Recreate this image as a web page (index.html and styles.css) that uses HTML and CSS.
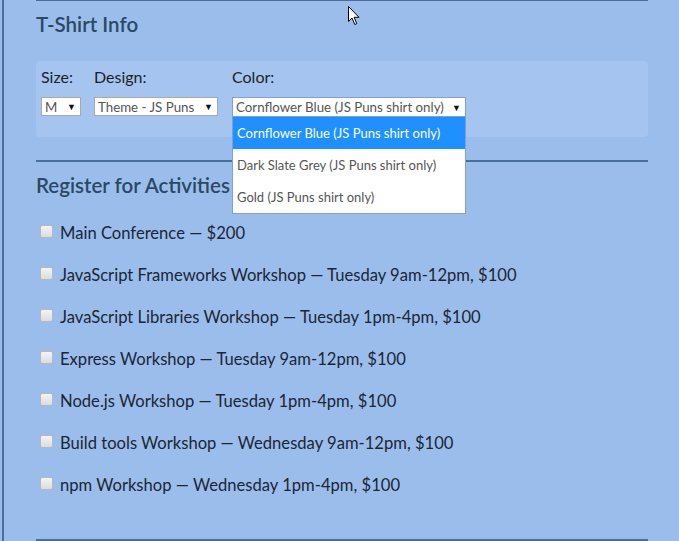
FILE: index.html
```html
<!DOCTYPE html>
<html lang="en">
<head>
<meta charset="utf-8">
<title>T-Shirt Info</title>
<link rel="stylesheet" href="styles.css">
</head>
<body>
<div class="page">
  <section class="block tshirt">
    <h2 class="legend">T-Shirt Info</h2>
    <div class="shirt-box">
      <div class="field">
        <span class="label">Size:</span>
        <div class="select select-size"><span class="value">M</span><span class="arrow">▼</span></div>
      </div>
      <div class="field">
        <span class="label">Design:</span>
        <div class="select select-design"><span class="value">Theme - JS Puns</span><span class="arrow">▼</span></div>
      </div>
      <div class="field field-color">
        <span class="label">Color:</span>
        <div class="select select-color"><span class="value">Cornflower Blue (JS Puns shirt only)</span><span class="arrow">▼</span></div>
        <ul class="dropdown">
          <li class="option active">Cornflower Blue (JS Puns shirt only)</li>
          <li class="option">Dark Slate Grey (JS Puns shirt only)</li>
          <li class="option">Gold (JS Puns shirt only)</li>
        </ul>
      </div>
    </div>
  </section>
  <section class="block activities">
    <h2 class="legend">Register for Activities</h2>
    <div class="list">
      <label class="act"><span class="cb"></span>Main Conference — $200</label>
      <label class="act"><span class="cb"></span>JavaScript Frameworks Workshop — Tuesday 9am-12pm, $100</label>
      <label class="act"><span class="cb"></span>JavaScript Libraries Workshop — Tuesday 1pm-4pm, $100</label>
      <label class="act"><span class="cb"></span>Express Workshop — Tuesday 9am-12pm, $100</label>
      <label class="act"><span class="cb"></span>Node.js Workshop — Tuesday 1pm-4pm, $100</label>
      <label class="act"><span class="cb"></span>Build tools Workshop — Wednesday 9am-12pm, $100</label>
      <label class="act"><span class="cb"></span>npm Workshop — Wednesday 1pm-4pm, $100</label>
    </div>
  </section>
  <section class="block payment"></section>
  <svg class="cursor" width="13" height="20" viewBox="0 0 13 20" aria-hidden="true">
    <path d="M0.5 0.5 L0.5 15.5 L4 12 L6.8 18.5 L8.8 17.6 L6.1 11.3 L11 11.3 Z" fill="#fff" stroke="#000" stroke-width="1" stroke-linejoin="miter"/>
  </svg>
</div>
</body>
</html>
```
FILE: styles.css
```css
html, body {
  margin: 0;
  padding: 0;
  background: #9bbdec;
  height: 100%;
  overflow: hidden;
}
body {
  font-family: "Lato", "Open Sans", sans-serif;
  color: #1d2b3a;
}
.page {
  position: relative;
  margin-left: 2px;
  border-left: 2px solid #4a719a;
  padding-left: 32px;
  width: 612px;
  min-height: 541px;
}
.block {
  border-top: 2px solid #46709a;
}
.tshirt {
  margin-top: -1px;
  padding-top: 10px;
  padding-bottom: 23px;
}
.legend {
  margin: 0;
  font-size: 20.5px;
  font-weight: 600;
  color: #2a4a63;
  line-height: 26px;
}
.shirt-box {
  margin-top: 24px;
  background: #a5c5f0;
  border-radius: 4px;
  height: 76px;
  display: flex;
  padding: 0 5px;
  gap: 13px;
}
.field {
  position: relative;
  display: flex;
  flex-direction: column;
  align-items: flex-start;
}
.field-color { margin-left: 1px; }
.label {
  font-size: 16px;
  line-height: 18px;
  margin-top: 7px;
  color: #1c1f26;
}
.select {
  margin-top: 11px;
  box-sizing: border-box;
  height: 19px;
  background: #fff;
  border: 1px solid #a9a9a9;
  display: flex;
  align-items: center;
  font-size: 13.3px;
  color: #555;
  padding: 0 4px 0 3px;
}
.select .value { flex: 1; white-space: nowrap; }
.select .arrow { font-size: 9px; color: #111; margin-left: 6px; }
.select-size { width: 40px; }
.select-design { width: 124px; }
.select-color { width: 234px; border-color: #7f9fd6; height: 20px; margin-top: 11px; }
.dropdown {
  position: absolute;
  left: 0;
  top: 56px;
  width: 234px;
  box-sizing: border-box;
  margin: 0;
  padding: 0;
  list-style: none;
  background: #fff;
  border: 1px solid #7f9fd6;
  border-top: none;
  z-index: 5;
}
.option {
  height: 32px;
  line-height: 32px;
  padding-left: 4px;
  font-size: 13px;
  color: #555;
  white-space: nowrap;
}
.option.active {
  background: #1e90ff;
  color: #fff;
}
.activities {
  padding-top: 10px;
  padding-bottom: 44px;
}
.list {
  margin-top: 24px;
  display: flex;
  flex-direction: column;
  gap: 21px;
}
.act {
  display: flex;
  align-items: center;
  height: 21px;
  font-size: 16.6px;
  color: #1b2633;
}
.cb {
  box-sizing: border-box;
  width: 13px;
  height: 13px;
  margin: 0 7px 0 4px;
  border: 1px solid #b8b8b8;
  border-radius: 2px;
  background: linear-gradient(#f4f4f4, #dcdcdc);
  position: relative;
  top: -1px;
}
.payment {
  height: 40px;
}
.cursor {
  position: absolute;
  left: 344px;
  top: 7px;
}
```
